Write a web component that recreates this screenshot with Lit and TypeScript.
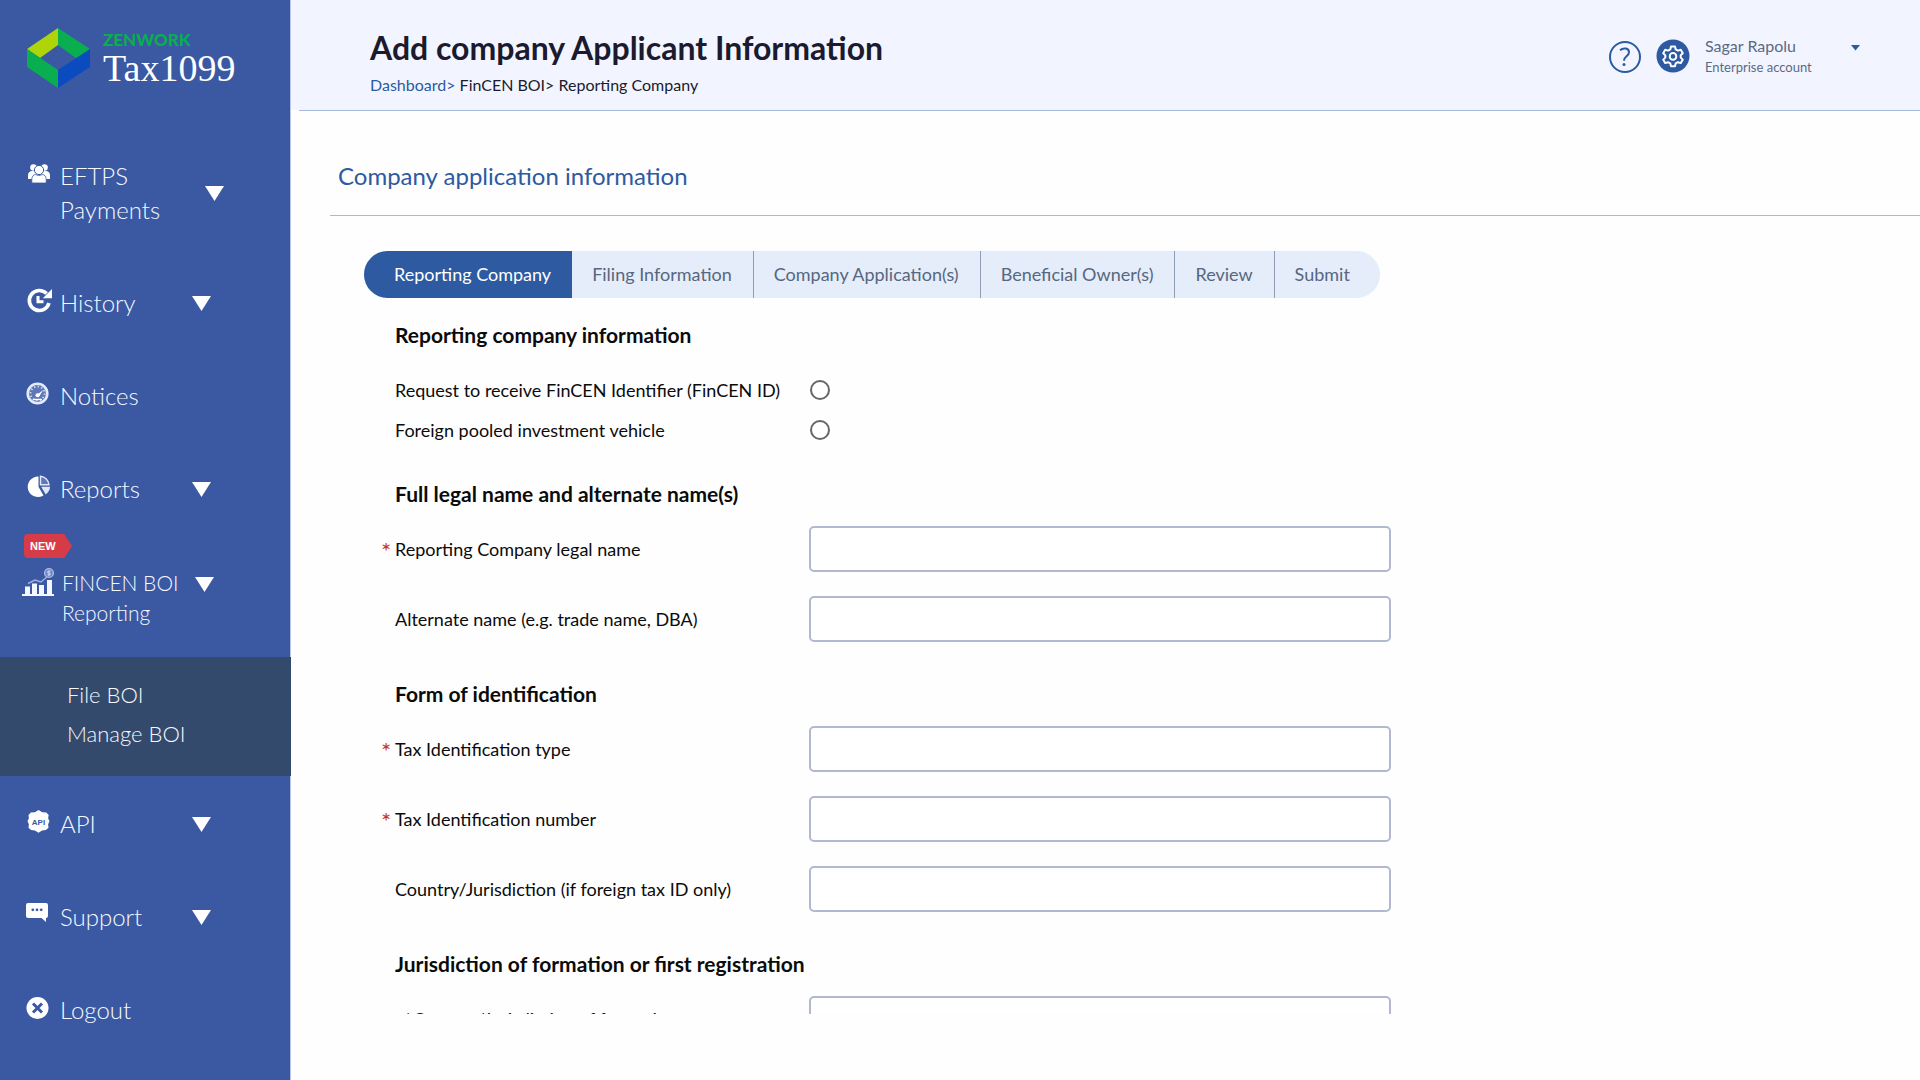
import { LitElement, html, svg, css, nothing } from "lit";
import type { TemplateResult } from "lit";
import { customElement, property, state } from "lit/decorators.js";
import { classMap } from "lit/directives/class-map.js";

const BLUE = "#3a59a2";

const icons: Record<string, TemplateResult> = {
  users: svg`
    <circle cx="7.5" cy="8.5" r="3.3"/><circle cx="18.5" cy="8.5" r="3.3"/>
    <path d="M2 20v-3.500c0-3 1.500-4.500 4.500-4.500h13c3 0 4.500 1.500 4.500 4.500V20z"/>
    <circle cx="13" cy="11" r="4.600" stroke="${BLUE}" stroke-width="1"/>
    <path d="M5.800 24v-3.500c0-3.300 1.800-5 4-5 1.600 1.300 4.800 1.300 6.400 0 2.200 0 4 1.700 4 5V24z" stroke="${BLUE}" stroke-width=".8"/>`,
  history: svg`
    <path d="M20.600 7.600A10 10 0 1 0 23 17" fill="none" stroke="#fff" stroke-width="3.600"/>
    <path d="M26 3v9.200h-9.200z"/>
    <path d="M12 10v5.800h5.500" fill="none" stroke="#fff" stroke-width="3"/>`,
  gauge: svg`
    <circle cx="11.5" cy="14.5" r="9.800" fill="#5f79b8" stroke="#e4ebfa" stroke-width="2.600"/>
    <circle cx="11.5" cy="14.5" r="7" fill="none" stroke="#dbe4f7" stroke-width="1.800" stroke-dasharray="1.200 2.466"/>
    <path d="M10 16.500l7-5.300-4.300 7z" fill="#fff"/><circle cx="11.5" cy="16.3" r="2" fill="#fff"/>
    <path d="M7 20.500h9" stroke="#fff" stroke-width="1.400"/>`,
  pie: svg`
    <path d="M12.500 4.500A10.300 10.300 0 1 0 17.500 23.500L12.500 14.800z"/>
    <path d="M14.500 4.300a9.500 9.500 0 0 1 8.500 8.500h-8.500z" fill="#5f79b8" stroke="#dfe7f8" stroke-width="1.400"/>
    <path d="M15.200 14.800h8.800a9.500 9.500 0 0 1-4.300 7.600z" fill="#dfe7f8"/>`,
  api: svg`
    <path d="M12.500 3l3.800 2.200 4 .4 2.400 2.500-.6 3.200 1.400 3-1.400 3 .4 3.400-2.600 2.200-3.800.5-3.600 2.400-3.600-2.400-3.800-.5-2.600-2.200.4-3.400-1.400-3 1.400-3-.4-3.200 2.400-2.500 4-.4z"/>
    <text x="12.500" y="17.500" text-anchor="middle" class="api-mark">API</text>`,
  support: svg`
    <path d="M2 3h18a2 2 0 0 1 2 2v11a2 2 0 0 1-2 2v4l-4.500-4H2a2 2 0 0 1-2-2V5a2 2 0 0 1 2-2z"/>
    <g fill="${BLUE}"><circle cx="6.800" cy="9.800" r="1.400"/><circle cx="11" cy="9.800" r="1.400"/><circle cx="15.200" cy="9.800" r="1.400"/></g>`,
  logout: svg`
    <circle cx="11.500" cy="15" r="11"/>
    <path d="M7 10.500l9 9m0-9l-9 9" stroke="${BLUE}" stroke-width="3"/>`,
};

const caret = html`<svg class="caret" viewBox="0 0 19 15" aria-hidden="true"><path d="M0 0h19l-9.500 15z"/></svg>`;

@customElement("side-nav")
export class SideNav extends LitElement {
  static styles = css`
    :host {
      display: flex;
      flex-direction: column;
      box-sizing: border-box;
      width: 291px;
      flex: none;
      background: #3a59a2;
      border-right: 1px solid #b9c5e2;
      color: #f6f8ff;
      font-family: Lato, "Liberation Sans", sans-serif;
      font-weight: 300;
    }
    svg { fill: #fff; flex: none; display: block; }
    .brand { display: flex; gap: 13px; padding: 28px 0 0 27px; height: 130px; box-sizing: border-box; color: #fff; text-decoration: none; }
    .logo { width: 63px; height: 60px; }
    .names { display: flex; flex-direction: column; }
    .maker { font-size: 17px; line-height: 24px; font-weight: 900; color: #09ae50; }
    .product { font-family: "Liberation Serif", serif; font-size: 38px; line-height: 32px; font-weight: 400; }
    .menu { list-style: none; margin: 0; padding: 29px 0 0; display: flex; flex-direction: column; gap: 59px; }
    .item, .sub-link {
      font: inherit; color: inherit; background: none; border: 0; padding: 0;
      text-align: left; text-decoration: none; cursor: pointer;
    }
    .item { display: flex; align-items: center; padding-left: 26px; font-size: 24px; line-height: 34px; }
    .icon { width: 26px; height: 28px; margin-right: 8px; align-self: flex-start; overflow: visible; }
    .label { width: 132px; white-space: pre-line; }
    .wide .label { width: 145px; }
    .caret { width: 19px; height: 15px; }
    .api-mark { font: 700 8px "Liberation Sans", sans-serif; fill: #3a59a2; }
    .group { margin: -31px 0 -28px; }
    .badge {
      display: flex; align-items: center; box-sizing: border-box; width: 48px; height: 24px; margin-left: 24px; padding-left: 6px;
      background: #d63c48; color: #fff; border-radius: 4px; font: 700 11px/24px "Liberation Sans", sans-serif;
      clip-path: polygon(0 0, 84% 0, 100% 50%, 84% 100%, 0 100%);
    }
    .boi { padding: 10px 0 0 22px; font-size: 21px; line-height: 30px; align-items: flex-start; }
    .boi .icon { width: 32px; }
    .boi .label { width: 133px; }
    .boi .caret { margin-top: 9px; }
    .sub { list-style: none; margin: 29px -1px 0 0; padding: 18px 0 23px 67px; background: #344a6d; font-size: 22px; line-height: 39px; }
  `;

  private entry(icon: string, label: string, opens = true, wide = false) {
    const cls = classMap({ item: true, wide });
    const body = html`
      <svg class="icon" viewBox="0 0 26 28" aria-hidden="true">${icons[icon]}</svg>
      <span class="label">${label}</span>${opens ? caret : nothing}`;
    return html`<li>${opens
      ? html`<button type="button" class=${cls}>${body}</button>`
      : html`<a href="#" class=${cls}>${body}</a>`}</li>`;
  }

  render() {
    return html`
      <a class="brand" href="#">
        <svg class="logo" viewBox="0 0 63 60" aria-hidden="true">
          <path fill="#aed40a" d="M0 21L31 0v17L13 30z"/>
          <path fill="#09ae50" d="M31 0l32 21-13 10-19-14z"/>
          <path fill="#0a4bc0" d="M63 21v18L31 60V42z"/>
          <path fill="#09ae50" d="M0 21l31 21v18L0 39z"/>
        </svg>
        <span class="names"><span class="maker">ZENWORK</span><span class="product">Tax1099</span></span>
      </a>
      <ul class="menu">
        ${this.entry("users", "EFTPS\nPayments", true, true)}
        ${this.entry("history", "History")}
        ${this.entry("gauge", "Notices", false)}
        ${this.entry("pie", "Reports")}
        <li class="group">
          <span class="badge">NEW</span>
          <button type="button" class="item boi">
            <svg class="icon" viewBox="0 0 32 28" aria-hidden="true">
              <g fill="#f4f7ff"><path d="M0 26h32v2H0zM3 18.500h5V26H3zM10 15.500h5V26h-5zM17 17h5v9h-5zM25 12h5v14h-5z"/></g>
              <path d="M6 15.500l7-3.500 6 2 7-6" fill="none" stroke="#9fb1dc" stroke-width="1.500"/>
              <circle cx="27" cy="5" r="4.400" fill="#6f87c2" stroke="#a9b9e0" stroke-width="1.400"/>
              <path d="M28.500 3.200h-2.200c-1.200 0-1.200 1.800 0 1.800h1.200c1.300 0 1.300 1.900 0 1.900h-2M27 2.200v5.800" fill="none" stroke="#dbe4f7" stroke-width=".8"/>
            </svg>
            <span class="label">FINCEN BOI Reporting</span>${caret}
          </button>
          <ul class="sub">
            <li><a class="sub-link" href="#">File BOI</a></li>
            <li><a class="sub-link" href="#">Manage BOI</a></li>
          </ul>
        </li>
        ${this.entry("api", "API")}
        ${this.entry("support", "Support")}
        ${this.entry("logout", "Logout", false)}
      </ul>`;
  }
}

@customElement("top-bar")
export class TopBar extends LitElement {
  static styles = css`
    :host {
      display: flex;
      justify-content: space-between;
      box-sizing: border-box;
      height: 111px;
      flex: none;
      margin-left: 8px;
      padding: 29px 60px 0 71px;
      background: #f2f5ff;
      border-bottom: 1px solid #a9b9dc;
      box-shadow: -8px -1px 0 #f2f5ff;
    }
    h1 { margin: 0; font-size: 32px; line-height: 38px; font-weight: 700; color: #1b1a2e; }
    .crumbs { margin: 0; font-size: 16px; line-height: 36px; color: #1b1a2e; }
    .crumbs a { color: #2d5aa0; text-decoration: none; }
    .account { display: flex; align-items: flex-start; color: #5a6a85; }
    button { border: 0; background: none; padding: 0; cursor: pointer; font: inherit; color: inherit; }
    svg { display: block; }
    .help { margin: 12px 15px 0 0; }
    .gear { margin: 10px 15px 0 0; }
    .user { display: flex; align-items: flex-start; text-align: left; padding-top: 5px; }
    .who { display: flex; flex-direction: column; width: 146px; font-size: 16px; line-height: 24px; }
    .plan { font-size: 13px; line-height: 18px; }
    .drop { margin-top: 11px; }
  `;

  render() {
    return html`
      <div>
        <h1>Add company Applicant Information</h1>
        <p class="crumbs"><a href="#">Dashboard&gt;</a> FinCEN BOI&gt; Reporting Company</p>
      </div>
      <div class="account">
        <button type="button" class="help" aria-label="Help">
          <svg width="32" height="32" viewBox="0 0 32 32" fill="none" stroke="#2d5aa0" stroke-width="2">
            <circle cx="16" cy="16" r="15"/>
            <path d="M11 9.300c3.500-3 9-2.200 9 2 0 4.200-5.300 3.800-5 8.500"/>
            <circle cx="15" cy="23.500" r="1.500" fill="#2d5aa0" stroke="none"/>
          </svg>
        </button>
        <button type="button" class="gear" aria-label="Settings">
          <svg width="34" height="34" viewBox="0 0 34 34" fill="none">
            <circle cx="17" cy="17" r="16.500" fill="#2d5aa0"/>
            <path stroke="#fff" stroke-width="2" stroke-linejoin="round" d="M15 7.500h4l.7 2.900 2.200 1.200 2.900-.9 2 3.500-2.100 2v2.400l2.100 2-2 3.500-2.900-.9-2.200 1.200-.7 2.900h-4l-.7-2.900-2.200-1.200-2.900.9-2-3.500 2.100-2v-2.400l-2.100-2 2-3.500 2.900.9 2.200-1.200z"/>
            <circle cx="17" cy="17.400" r="3.300" stroke="#fff" stroke-width="2"/>
          </svg>
        </button>
        <button type="button" class="user">
          <span class="who">Sagar Rapolu<span class="plan">Enterprise account</span></span>
          <svg class="drop" width="9" height="6" viewBox="0 0 9 6"><path fill="#2d5aa0" d="M0 0h9L4.500 5.500z"/></svg>
        </button>
      </div>`;
  }
}

@customElement("step-bar")
export class StepBar extends LitElement {
  static styles = css`
    :host { display: block; }
    ol { list-style: none; display: flex; width: max-content; margin: 0; padding: 0; background: #e5edfa; border-radius: 24px; overflow: hidden; }
    li + li + li { border-left: 1px solid #8f9db5; }
    button { border: 0; background: none; font: inherit; font-size: 18px; line-height: 47px; padding: 0 21px 0 20px; color: #56677f; cursor: pointer; }
    li:first-child button { padding-left: 30px; }
    li:last-child button { padding-right: 30px; }
    .current { background: #2d5aa0; color: #fff; }
  `;
  @state() private current = 0;
  private steps = ["Reporting Company", "Filing Information", "Company Application(s)", "Beneficial Owner(s)", "Review", "Submit"];

  render() {
    return html`<ol>${this.steps.map((s, i) => html`<li>
      <button type="button" class=${classMap({ current: i === this.current })} @click=${() => (this.current = i)}>${s}</button>
    </li>`)}</ol>`;
  }
}

@customElement("form-field")
export class FormField extends LitElement {
  static styles = css`
    :host { display: block; }
    .row { display: grid; grid-template-columns: 428px 582px; align-items: center; height: 70px; }
    .row.pick { height: 40px; }
    label { display: flex; padding-left: 14px; font-size: 18px; line-height: 24px; }
    label.required { padding-left: 0; }
    .indent label.required { padding-left: 22px; }
    .star { width: 14px; font-size: 24px; line-height: 28px; height: 24px; color: #c9302c; }
    .indent .star { width: 10px; color: inherit; }
    .text { box-sizing: border-box; width: 100%; height: 46px; border: 2px solid #b2b8d0; border-radius: 5px; background: #fff; font: inherit; font-size: 18px; padding: 0 12px; }
    .radio { appearance: none; width: 20px; height: 20px; border: 2px solid #666; border-radius: 50%; margin: 0 0 0 1px; }
    .radio:checked { border-width: 6px; }
  `;
  @property() label = "";
  @property({ type: Boolean }) required = false;
  @property({ type: Boolean }) indent = false;
  @property() kind: "text" | "radio" = "text";

  render() {
    return html`<div class=${classMap({ row: true, pick: this.kind === "radio", indent: this.indent })}>
      <label for="control" class=${classMap({ required: this.required })}>${this.required
        ? html`<span class="star">*</span>` : nothing}${this.label}</label>
      <input id="control" class=${this.kind} type=${this.kind} ?required=${this.required}>
    </div>`;
  }
}

@customElement("app-root")
export class AppRoot extends LitElement {
  static styles = css`
    :host {
      display: flex;
      height: 100vh;
      overflow: hidden;
      background: #fefefe;
      color: #0b0b0b;
      font-family: Lato, "Liberation Sans", sans-serif;
    }
    .page { display: flex; flex-direction: column; flex: 1; min-width: 0; padding-bottom: 66px; box-sizing: border-box; }
    .section { margin: 0 0 0 39px; padding: 47px 0 22px 8px; border-bottom: 1px solid #a9b9dc; font-size: 24px; line-height: 35px; font-weight: 400; color: #2d5aa0; }
    .scroll { flex: 1; min-height: 0; overflow: hidden; padding: 35px 0 0 73px; }
    fieldset { border: 0; margin: 0; padding: 0 0 0 17px; min-width: 0; }
    legend { display: block; padding: 20px 0 0 14px; font-size: 21px; line-height: 34px; font-weight: 700; height: 72px; box-sizing: border-box; }
    .spaced legend { padding-top: 23px; height: 60px; }
    .first { margin-bottom: 4px; }
  `;

  render() {
    return html`
      <side-nav></side-nav>
      <main class="page">
        <top-bar></top-bar>
        <h2 class="section">Company application information</h2>
        <div class="scroll">
          <step-bar></step-bar>
          <fieldset class="first">
            <legend>Reporting company information</legend>
            <form-field kind="radio" label="Request to receive FinCEN Identifier (FinCEN ID)"></form-field>
            <form-field kind="radio" label="Foreign pooled investment vehicle"></form-field>
          </fieldset>
          <fieldset class="spaced">
            <legend>Full legal name and alternate name(s)</legend>
            <form-field required label="Reporting Company legal name"></form-field>
            <form-field label="Alternate name (e.g. trade name, DBA)"></form-field>
          </fieldset>
          <fieldset class="spaced">
            <legend>Form of identification</legend>
            <form-field required label="Tax Identification type"></form-field>
            <form-field required label="Tax Identification number"></form-field>
            <form-field label="Country/Jurisdiction (if foreign tax ID only)"></form-field>
          </fieldset>
          <fieldset class="spaced">
            <legend>Jurisdiction of formation or first registration</legend>
            <form-field required indent label="Country/Jurisdiction of formation"></form-field>
          </fieldset>
        </div>
      </main>`;
  }
}
